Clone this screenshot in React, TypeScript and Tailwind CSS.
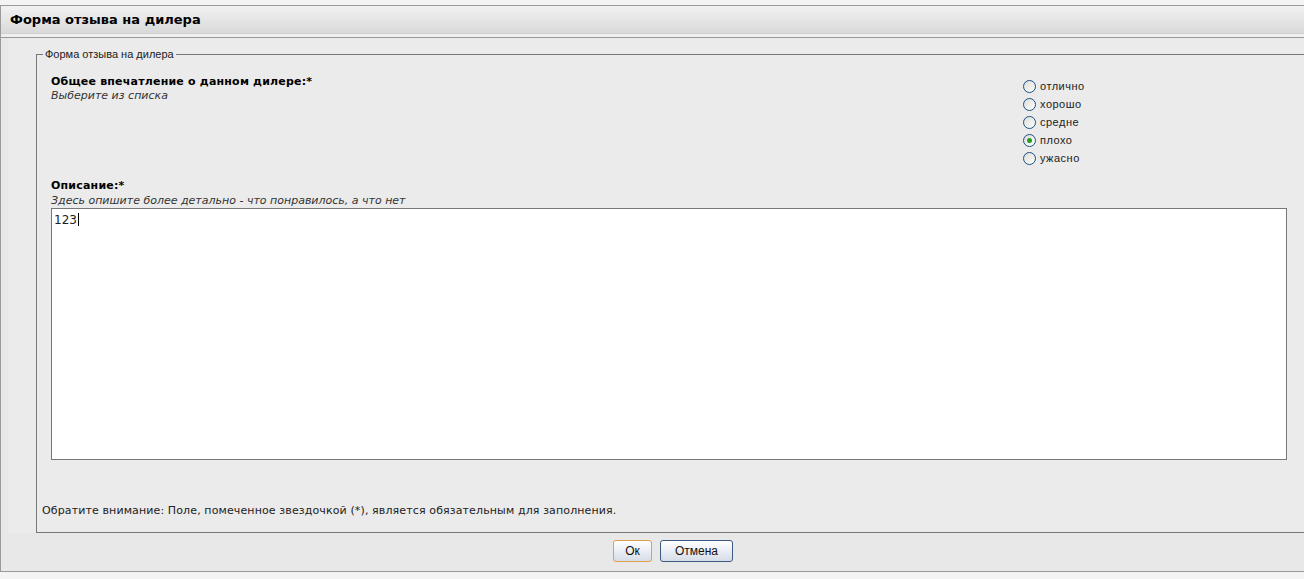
import React from 'react';

const options = ['отлично', 'хорошо', 'средне', 'плохо', 'ужасно'];

function Radio({ label, checked }: { label: string; checked?: boolean }) {
  return (
    <label className="flex h-[18px] items-center">
      <span className="flex h-[13px] w-[13px] items-center justify-center rounded-full border border-[#1c5180] bg-gradient-to-br from-[#dcdcd7] to-[#ffffff]">
        {checked && <span className="h-[5px] w-[5px] rounded-full bg-[#21a121]" />}
      </span>
      <span className="ml-[4px] text-[11px] tracking-[0.5px] text-[#222] [font-family:Tahoma,'Liberation_Sans',sans-serif]">{label}</span>
    </label>
  );
}

export default function App() {
  return (
    <div className="h-[579px] w-[1304px] overflow-hidden bg-[#f4f4f4] pt-[5px] text-black [font-family:'DejaVu_Sans',Verdana,sans-serif]">
      <div className="w-[1340px] border border-[#9a9a9a] bg-[#e8e8e8]">
        {/* title bar */}
        <div className="h-[28px] border-b border-[#d0d0d0] bg-gradient-to-b from-[#f2f2f2] to-[#d9d9d9] pl-[9px] pt-[6px] text-[13px] font-bold leading-[16px]">
          Форма отзыва на дилера
        </div>
        <div className="h-[4px] border-b border-[#999] bg-[#efefef]" />

        <div className="ml-[7px] bg-[#ebebeb] pl-[28px] pt-[10px]">
          <fieldset className="w-[1300px] border border-[#777] pl-[14px] pr-0 pb-0">
            <legend className="-ml-[8px] px-[2px] text-[11px] leading-[13px] text-[#222] [font-family:Tahoma,'Liberation_Sans',sans-serif]">
              Форма отзыва на дилера
            </legend>

            <div className="mt-[14px] flex">
              <div className="w-[972px] text-[11px] leading-[14px]">
                <div className="font-bold tracking-[0.2px]">Общее впечатление о данном дилере:*</div>
                <div className="italic text-[#333]">Выберите из списка</div>
              </div>
              <div className="mt-[2px] flex flex-col">
                {options.map((o) => (
                  <Radio key={o} label={o} checked={o === 'плохо'} />
                ))}
              </div>
            </div>

            <div className="mt-[11px] text-[11px] leading-[15px]">
              <div className="font-bold tracking-[0.2px]">Описание:*</div>
              <div className="italic text-[#333]">Здесь опишите более детально - что понравилось, а что нет</div>
            </div>
            <div className="h-[252px] w-[1236px] border border-[#777] bg-white px-[2px] pt-[2px] text-[12px] leading-[15px] text-[#222]">
              123<span className="ml-px inline-block h-[13px] w-px translate-y-[2px] bg-black" />
            </div>

            <div className="-ml-[9px] mt-[44px] pb-[14px] text-[11px] leading-[14px] tracking-[0.12px] text-[#222]">
              Обратите внимание: Поле, помеченное звездочкой (*), является обязательным для заполнения.
            </div>
          </fieldset>
        </div>

        <div className="flex gap-[8px] pl-[612px] pt-[7px] pb-[9px] [font-family:Tahoma,'Liberation_Sans',sans-serif]">
          <button className="h-[22px] w-[39px] rounded-[3px] border border-[#e0a050] bg-gradient-to-b from-[#ffffff] to-[#d6dde8] text-[12px] text-[#111]">
            Ок
          </button>
          <button className="h-[22px] w-[73px] rounded-[3px] border border-[#3b5a82] bg-gradient-to-b from-[#ffffff] to-[#d6dde8] text-[12px] text-[#111]">
            Отмена
          </button>
        </div>
      </div>
    </div>
  );
}
